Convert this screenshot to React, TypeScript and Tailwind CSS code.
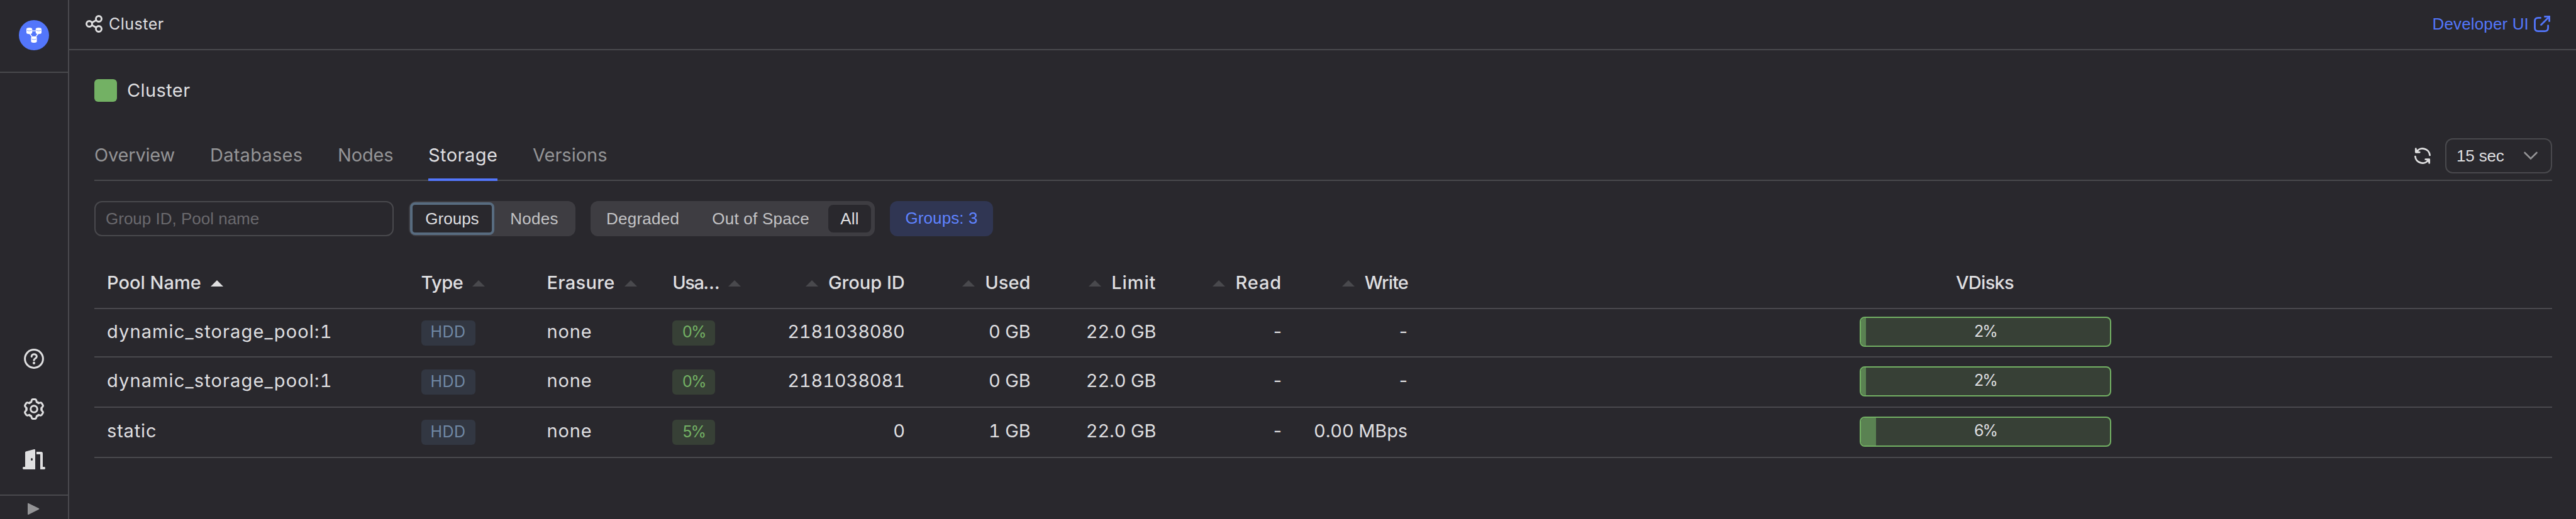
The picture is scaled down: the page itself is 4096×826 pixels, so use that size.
import type { ReactNode } from "react";

const HELV = "font-['Liberation_Sans',Arial,sans-serif] text-[26px] leading-[30px]";

function Logo() {
  return (
    <svg width="48" height="48" viewBox="0 0 48 48" fill="none">
      <circle cx="24" cy="24" r="24" fill="#5376fb" />
      <path d="M19 17.2h11M17 21l5.5 7.5M31 21l-5.5 7.5" stroke="#fff" strokeWidth="1.3" />
      <g fill="#fff">
        <path d="M12 14.2c0-3 9.2-3 9.2 0v6c0 2.6-9.2 2.6-9.2 0z" />
        <path d="M26.8 14.2c0-3 9.2-3 9.2 0v6c0 2.6-9.2 2.6-9.2 0z" />
        <path d="M19.4 28c0-3 9.2-3 9.2 0v6c0 2.8-9.2 2.8-9.2 0z" />
      </g>
      <g stroke="#5376fb" strokeWidth=".7">
        <path d="M13 16.2c1.8 1.2 5.4 1.2 7.2 0M27.8 16.2c1.8 1.2 5.4 1.2 7.2 0M20.4 30c1.8 1.2 5.4 1.2 7.2 0" />
      </g>
    </svg>
  );
}

function HelpIcon() {
  return (
    <svg width="32" height="32" viewBox="0 0 32 32" fill="none" stroke="#dfdfe0" strokeWidth="3">
      <circle cx="16" cy="16" r="14.4" />
      <path d="M12.2 12.6c0-5.2 8.2-5 8.2-.3 0 3.2-4.4 3-4.4 6" strokeLinecap="round" />
      <circle cx="16" cy="22.8" r="2.1" fill="#dfdfe0" stroke="none" />
    </svg>
  );
}

function GearIcon() {
  return (
    <svg width="34" height="34" viewBox="-17 -17 34 34" fill="none" stroke="#dfdfe0" strokeWidth="3">
      <circle r="5.3" />
      {[0, 60, 120, 180, 240, 300].map((a) => (
        <path
          key={a}
          transform={`rotate(${a})`}
          strokeLinecap="round"
          d="M-6.15-10.65Q-4.4-10-4.1-12Q-3.7-15.4-1.6-15.4H1.6Q3.7-15.4 4.1-12Q4.4-10 6.15-10.65"
        />
      ))}
    </svg>
  );
}

function DoorIcon() {
  return (
    <svg width="36" height="32" viewBox="0 0 36 32" fill="none">
      <path
        fillRule="evenodd"
        fill="#dfdfe0"
        d="M4 5.2Q4 4 5.2 3.6L18.4.1Q20-.2 20 1.4V32H1.6Q0 32 0 30t1.6-2H4zM14.5 13.9c-2 0-2 4.2 0 4.2s2-4.2 0-4.2z"
      />
      <path fill="#dfdfe0" d="M22 4h7.5Q32 4 32 6.5V28h2.4q1.6 0 1.6 2t-1.6 2H28V8h-6z" />
    </svg>
  );
}

function NodesIcon() {
  return (
    <svg width="28" height="28" viewBox="0 0 28 28" fill="none" stroke="#dfdfe0" strokeWidth="2.9">
      <circle cx="21" cy="6" r="4.5" />
      <circle cx="6" cy="14" r="4.5" />
      <circle cx="21" cy="22" r="4.5" />
      <path d="M10 12l7-3.8M10 16l7 3.8" />
    </svg>
  );
}

function ExternalIcon() {
  return (
    <svg width="26" height="26" viewBox="0 0 26 26" fill="none" stroke="#5376fb" strokeWidth="2.8">
      <path strokeLinecap="round" d="M10.6 3.4H6.6Q1.5 3.4 1.5 8.5V19.500Q1.5 24.600 6.6 24.600H17.500Q22.600 24.600 22.600 19.500V15.600" />
      <path d="M11.500 14.500L24 2" strokeLinecap="round" />
      <path d="M16.300 1.400H24.600V9.700" />
    </svg>
  );
}

function RefreshIcon() {
  return (
    <svg width="26" height="26" viewBox="0 0 26 26" fill="none" stroke="#dfdfe0" strokeWidth="2.7">
      {[0, 180].map((a) => (
        <g key={a} transform={`rotate(${a} 13 13)`}>
          <path strokeLinecap="round" d="M3.300 6.800A11.600 11.600 0 0 1 24.600 12" />
          <path fill="#dfdfe0" strokeLinecap="round" strokeLinejoin="round" d="M2.300 1.600V7.300H8.300" />
        </g>
      ))}
    </svg>
  );
}

function SortArrow({ active }: { active?: boolean }) {
  return (
    <svg width="20" height="10" viewBox="0 0 20 10" className="mt-px shrink-0">
      <path d="M10 0L20 10H0z" fill={active ? "#dfdfe0" : "#49494d"} />
    </svg>
  );
}

function Th({ children, active, right }: { children: ReactNode; active?: boolean; right?: boolean }) {
  return (
    <div className={right ? "flex flex-row-reverse items-center gap-4 pr-5" : "flex items-center gap-[15px] pl-5"}>
      {children}
      <SortArrow active={active} />
    </div>
  );
}

const COLS =
  "grid grid-cols-[499.500px_200px_199.800px_149.800px_259.700px_199.800px_199.800px_199.800px_199.800px_minmax(0,1fr)]";

interface Group {
  pool: string;
  tracking: string;
  usage: string;
  id: string;
  used: string;
  write: string;
  disk: number;
  height: string;
  fill: string;
}

const groups: Group[] = [
  { pool: "dynamic_storage_pool:1", tracking: "tracking-[1.12px]", usage: "0%", id: "2181038080", used: "0 GB", write: "-", disk: 2, height: "h-[77px]", fill: "w-2" },
  { pool: "dynamic_storage_pool:1", tracking: "tracking-[1.12px]", usage: "0%", id: "2181038081", used: "0 GB", write: "-", disk: 2, height: "h-20", fill: "w-2" },
  { pool: "static", tracking: "tracking-[0.84px]", usage: "5%", id: "0", used: "1 GB", write: "0.00 MBps", disk: 6, height: "h-20", fill: "w-6" },
];

function Metric({ value }: { value: string }) {
  return (
    <div className={value === "-" ? "pr-5 pb-1 text-right normal-nums" : "pr-5 pb-1 text-right tracking-[-0.15px]"}>
      {value}
    </div>
  );
}

function Row({ g }: { g: Group }) {
  return (
    <div className={`${COLS} ${g.height} items-center border-b-2 border-[#49494d]`}>
      <div className={`pb-1 pl-5 ${g.tracking}`}>{g.pool}</div>
      <div className="pl-5">
        <span className="flex h-10 w-[86px] items-center justify-center rounded-md bg-[#323742] pb-[3px] text-[25px] tracking-[0.4px] text-[#7189a5]">
          HDD
        </span>
      </div>
      <div className="pb-1 pl-5 tracking-[0.86px]">none</div>
      <div className="pl-5">
        <span className="flex h-10 w-[68px] items-center justify-center rounded-md bg-[#374036] pb-[3px] text-[25px] tracking-[-1.8px] text-[#73b164] normal-nums">
          {g.usage}
        </span>
      </div>
      <Metric value={g.id} />
      <Metric value={g.used} />
      <Metric value="22.0 GB" />
      <Metric value="-" />
      <Metric value={g.write} />
      <div className="flex justify-center pr-0.5 pb-[3px]">
        <div className="grid h-12 w-[400px] overflow-hidden rounded-lg border-2 border-[#73b164] bg-[#374036]">
          <div className={`col-start-1 row-start-1 h-full bg-[#5a8252] ${g.fill}`} />
          <div className="col-start-1 row-start-1 flex items-center justify-center pb-[3px] text-[25px] tracking-[-2px] normal-nums">
            {g.disk}%
          </div>
        </div>
      </div>
    </div>
  );
}

export default function App() {
  return (
    <div className="flex h-[826px] w-[4096px] overflow-hidden bg-[#29282d] font-[Inter,sans-serif] text-[29px] leading-[36px] whitespace-nowrap text-[#dfdfe0] tabular-nums">
      <aside className="flex w-[110px] shrink-0 flex-col border-r-2 border-[#49494d]">
        <div className="flex h-[116px] justify-center border-b-2 border-[#49494d] pt-8">
          <Logo />
        </div>
        <div className="flex flex-1 flex-col items-center justify-end pb-10">
          <HelpIcon />
          <div className="h-[47px]" />
          <GearIcon />
          <div className="h-[47px]" />
          <DoorIcon />
        </div>
        <div className="flex h-[39px] justify-center border-t-2 border-[#49494d] pt-[11px]">
          <svg width="20" height="20" viewBox="0 0 20 20">
            <path d="M0 1.800Q0 .3 1.400 1L17.800 9Q19.200 10 17.800 10.700L1.400 19Q0 19.600 0 18z" fill="#949496" />
          </svg>
        </div>
      </aside>
      <div className="flex min-w-0 flex-1 flex-col">
        <header className="flex h-20 items-center justify-between border-b-2 border-[#49494d] pr-[41px] pb-[3px] pl-[26px]">
          <div className="flex items-center gap-[9px]">
            <NodesIcon />
            <span className="text-[25px] tracking-[0.5px]">Cluster</span>
          </div>
          <a className={`flex items-center gap-2 text-[#5376fb] ${HELV}`}>
            <span className="tracking-[0.15px]">Developer UI</span>
            <ExternalIcon />
          </a>
        </header>
        <main className="pr-[38px] pl-10">
          <div className="flex h-[128px] items-center gap-4">
            <div className="h-9 w-9 rounded-md bg-[#73b164]" />
            <h1 className="pb-px tracking-[0.4px]">Cluster</h1>
          </div>
          <div className="flex h-20 items-end justify-between border-b-2 border-[#49494d]">
            <nav className="-mb-0.5 flex items-end gap-[56px] text-[#949496]">
              <span className="h-[59px] w-[128px] tracking-[-0.2px]">Overview</span>
              <span className="h-[59px] w-[147px] tracking-[0.25px]">Databases</span>
              <span className="h-[59px] w-[88px] tracking-[-0.15px]">Nodes</span>
              <span className="h-[59px] w-[110px] border-b-4 border-[#5376fb] tracking-[0.45px] text-[#dfdfe0]">Storage</span>
              <span className="h-[59px]">Versions</span>
            </nav>
            <div className="flex items-center gap-[23px] pb-[10px]">
              <RefreshIcon />
              <div className={`flex h-14 w-[170px] items-center justify-between rounded-xl border-2 border-[#49494d] pr-[20px] pl-4 ${HELV}`}>
                <span className="tracking-[-0.15px]">15 sec</span>
                <svg width="24" height="16" viewBox="0 0 24 16" fill="none">
                  <path d="M2.500 3L12 12.500L21.500 3" stroke="#949496" strokeWidth="2.600" strokeLinecap="round" />
                </svg>
              </div>
            </div>
          </div>
          <div className={`mt-8 flex h-14 ${HELV}`}>
            <div className="flex w-[476px] items-center rounded-xl border-2 border-[#49494d] pl-4 text-[#6a696d]">
              Group ID, Pool name
            </div>
            <div className="ml-6 flex w-[265px] items-center rounded-xl bg-[#3e3d42] p-0.5 text-[#c3c3c5]">
              <span className="flex h-[52px] w-[134px] items-center justify-center rounded-lg border-4 border-[#586c80] bg-[#29282d] text-[#dfdfe0]">
                Groups
              </span>
              <span className="flex flex-1 justify-center tracking-[0.3px]">Nodes</span>
            </div>
            <div className="ml-6 flex w-[452px] items-center rounded-xl bg-[#3e3d42] pr-1.5 pl-[25px] text-[#c3c3c5]">
              <span className="tracking-[0.25px]">Degraded</span>
              <span className="ml-[52px] tracking-[0.25px]">Out of Space</span>
              <span className="ml-auto flex h-11 w-[68px] items-center justify-center rounded-lg bg-[#29282d] tracking-[0.2px] text-[#dfdfe0]">
                All
              </span>
            </div>
            <div className="ml-6 flex w-[164px] items-center justify-center rounded-xl bg-[#303653] pb-0.5 tracking-[0.1px] text-[#5f83ff]">
              Groups: 3
            </div>
          </div>
          <div className={`${COLS} mt-[34px] h-[82px] items-center border-b-2 border-[#49494d] font-medium`}>
            <Th active>Pool Name</Th>
            <Th><span className="tracking-[-0.5px]">Type</span></Th>
            <Th><span className="tracking-[0.35px]">Erasure</span></Th>
            <Th><span className="w-[74px] tracking-[-1.5px] normal-nums">Usa…</span></Th>
            <Th right><span>Group ID</span></Th>
            <Th right><span className="tracking-[0.1px]">Used</span></Th>
            <Th right><span className="tracking-[0.9px]">Limit</span></Th>
            <Th right><span className="tracking-[0.9px]">Read</span></Th>
            <Th right><span className="-mr-px tracking-[-0.9px]">Write</span></Th>
            <div className="pr-1 text-center tracking-[-0.7px]">VDisks</div>
          </div>
          {groups.map((g, i) => (
            <Row key={i} g={g} />
          ))}
        </main>
      </div>
    </div>
  );
}
